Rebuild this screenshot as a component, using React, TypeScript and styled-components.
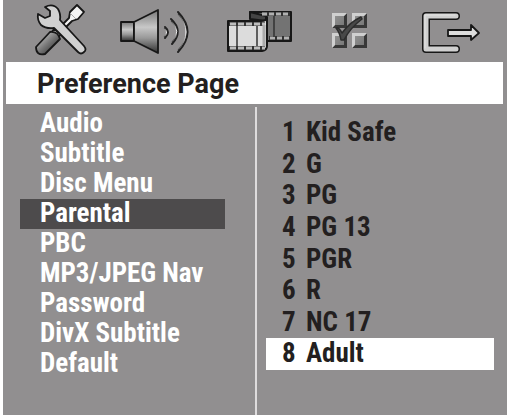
import React, { useState } from "react";
import styled, { createGlobalStyle } from "styled-components";

const GlobalStyle = createGlobalStyle`
  * { box-sizing: border-box; }
  body { margin: 0; background: #fff; }
  button { font: inherit; color: inherit; border: 0; padding: 0; background: none; cursor: pointer; }
`;

const Screen = styled.main`
  display: flex;
  flex-direction: column;
  min-height: 100vh;
  margin-left: 3px;
  background: #918f90;
  color: #231f20;
  font-family: "Roboto Condensed", "Liberation Sans Narrow", "Arial Narrow", "Liberation Sans", sans-serif;
  font-size: 27px;
  font-weight: 700;
`;

const IconBar = styled.nav`
  display: grid;
  grid-template-columns: 102fr 102fr 102fr 90fr 108fr;
  height: 62px;
`;

const IconButton = styled.button`
  display: flex;
  min-width: 0;
`;

const Icon = styled.svg`
  width: 100%;
  height: 62px;
`;

const Title = styled.h1`
  margin: 0 4px 0 3px;
  padding: 2px 31px 0;
  background: #fff;
  font-family: Roboto, "Liberation Sans", Arial, sans-serif;
  font-size: 27px;
  line-height: 40px;
  white-space: nowrap;
`;

const Columns = styled.div`
  display: grid;
  grid-template-columns: 1fr 1fr;
  flex: 1;
  padding-top: 3px;
`;

const Menu = styled.ul`
  margin: 0;
  padding: 2px 30px 0 17px;
  list-style: none;
`;

const MenuButton = styled.button<{ $active: boolean }>`
  display: block;
  width: 100%;
  padding: 0 0 2px 20px;
  background: ${(p) => (p.$active ? "#4d4b4c" : "transparent")};
  color: #fff;
  line-height: 28px;
  text-align: left;
  white-space: nowrap;
`;

const Panel = styled.section`
  border-left: 2px solid #dedcdd;
  padding: 10px 13px 0 9px;
`;

const Ratings = styled.ol`
  display: grid;
  grid-template-rows: repeat(8, 1fr);
  height: 253px;
  margin: 0;
  padding: 0;
  list-style: none;
`;

const RatingButton = styled.button<{ $active: boolean }>`
  display: grid;
  grid-template-columns: 24px 1fr;
  width: 100%;
  height: 100%;
  padding-left: 16px;
  background: ${(p) => (p.$active ? "#fff" : "transparent")};
  line-height: 30px;
  text-align: left;
  white-space: nowrap;
`;

const ToolsIcon = () => (
  <Icon viewBox="3 0 102 62" aria-hidden="true">
    <defs>
      <linearGradient id="handle" x1="0" y1="0" x2="1" y2="1">
        <stop offset=".15" stopColor="#c4c4c4" />
        <stop offset=".5" stopColor="#777" />
        <stop offset=".85" stopColor="#333" />
      </linearGradient>
    </defs>
    <g stroke="#171717" strokeWidth="1.8" strokeLinejoin="round">
      <path d="M56 31 69 18 70 12 77 5 84 12 78 19 72 21 60 33Z" fill="#f4f4f4" />
      <path d="M51 33 54 29 61 34 57 39Z" fill="#ddd" />
      <path d="M36 47 50 32Q58 31 60 39L45 54Q36 56 36 47Z" fill="url(#handle)" />
      <path d="M45 7Q53 3 58 9 61 14 60 20L84 46Q87 50 84 52 81 55 78 52L54 28Q46 29 41 25 37 20 38 14L45 18 50 16 50 11Z" fill="#d0d0d0" />
    </g>
    <path d="m70 13 6 6" stroke="#aaa" strokeWidth="1" />
  </Icon>
);

const SpeakerIcon = () => (
  <Icon viewBox="105 0 102 62" aria-hidden="true">
    <defs>
      <linearGradient id="cone" x1="0" y1="0" x2="0" y2="1">
        <stop offset="0" stopColor="#777" />
        <stop offset=".4" stopColor="#c8c8c8" />
        <stop offset=".65" stopColor="#999" />
        <stop offset="1" stopColor="#303030" />
      </linearGradient>
      <linearGradient id="wave" x1="0" y1="0" x2="0" y2="1">
        <stop offset="0" stopColor="#333" />
        <stop offset=".5" stopColor="#fff" />
        <stop offset="1" stopColor="#333" />
      </linearGradient>
    </defs>
    <g fill="url(#cone)" stroke="#171717" strokeWidth="1.8" strokeLinejoin="round">
      <path d="M121 22H134V41H121Z" />
      <path d="M134 22 158 10V53L134 41Z" />
    </g>
    <g fill="none" stroke="#222" strokeWidth="2" strokeLinecap="round">
      <path d="M165 27Q171 32 165 38" />
      <path d="M171 19Q184 31 172 44" />
      <path d="M178 12Q197 32 178 52" />
    </g>
    <g fill="none" stroke="url(#wave)" strokeWidth="1">
      <path d="M164 28Q169 32 164 37" />
      <path d="M171 21Q182 31 172 42" />
      <path d="M178 14Q194 32 178 50" />
    </g>
  </Icon>
);

const FilmIcon = () => (
  <Icon viewBox="207 0 102 62" aria-hidden="true">
    <g stroke="#171717" strokeWidth="2" strokeLinejoin="round">
      <path d="M250 12H291V41H264V17Z" fill="#737373" />
      <path d="M250 12 266 16V21L250 19Z" fill="#444" />
      <path d="M228 21H261Q267 21 267 17V46Q267 50 262 51H228Z" fill="#dcdcdc" />
    </g>
    <path d="M262 14H290M269 38H290" stroke="#333" strokeWidth="4" />
    <path d="M262 14H289M270 38H290" stroke="#b0b0b0" strokeWidth="3" strokeDasharray="5 2" />
    <path d="M229 24H265M229 48H265" stroke="#333" strokeWidth="4" />
    <path d="M230 24H265M230 48H265" stroke="#bcbcbc" strokeWidth="3" strokeDasharray="6 2" />
    <path d="M237 26V46M257 26V46M274 16V37" stroke="#333" strokeWidth="1.5" />
    <path d="M264 25V46" stroke="#aaa" strokeWidth="3" />
  </Icon>
);

const TILES = [[332, 13], [352, 13], [332, 33], [352, 33]];

const CheckIcon = () => (
  <Icon viewBox="309 0 90 62" aria-hidden="true">
    <defs>
      <linearGradient id="tile" x1="0" y1="0" x2="1" y2="1">
        <stop offset="0" stopColor="#999" />
        <stop offset="1" stopColor="#707070" />
      </linearGradient>
    </defs>
    {TILES.map(([x, y]) => (
      <g key={`${x}-${y}`}>
        <path d={`M${x} ${y}h15v15h-15z`} fill="url(#tile)" />
        <path d={`M${x} ${y + 15}h15v-15l-3 3v9h-9z`} fill="#383838" />
        <path d={`M${x} ${y + 15}v-15h15l-3 3h-9v9z`} fill="#d0d0d0" />
      </g>
    ))}
    <path d="M336 28Q339 27 342 33 350 22 361 17L362 19Q350 28 344 40H341Q340 33 336 28Z" fill="#484848" stroke="#2c2c2c" strokeWidth="1.5" strokeLinejoin="round" />
  </Icon>
);

const ExitIcon = () => (
  <Icon viewBox="399 0 108 62" aria-hidden="true">
    <g fill="none" strokeLinecap="round" strokeLinejoin="round">
      <path d="M456 16H426V49H456" stroke="#171717" strokeWidth="8" />
      <path d="M456 16H426V49H456" stroke="#d0d0d0" strokeWidth="5" />
      <path d="M455 15H425V48" stroke="#e4e4e4" strokeWidth="1" />
    </g>
    <path d="M448 30H471V25L479 33 471 40V36H448Z" fill="#dedede" stroke="#171717" strokeWidth="1.8" strokeLinejoin="round" />
  </Icon>
);

const TABS = [
  { name: "General", Glyph: ToolsIcon },
  { name: "Sound", Glyph: SpeakerIcon },
  { name: "Video", Glyph: FilmIcon },
  { name: "Preferences", Glyph: CheckIcon },
  { name: "Exit", Glyph: ExitIcon },
];

const MENU = ["Audio", "Subtitle", "Disc Menu", "Parental", "PBC", "MP3/JPEG Nav", "Password", "DivX Subtitle", "Default"];
const RATINGS = ["Kid Safe", "G", "PG", "PG 13", "PGR", "R", "NC 17", "Adult"];

export default function App() {
  const [section, setSection] = useState("Parental");
  const [rating, setRating] = useState("Adult");

  return (
    <>
      <GlobalStyle />
      <Screen>
        <IconBar aria-label="Setup pages">
          {TABS.map(({ name, Glyph }) => (
            <IconButton key={name} type="button" aria-label={name}>
              <Glyph />
            </IconButton>
          ))}
        </IconBar>
        <Title>Preference Page</Title>
        <Columns>
          <Menu>
            {MENU.map((item) => (
              <li key={item}>
                <MenuButton type="button" $active={item === section} aria-pressed={item === section} onClick={() => setSection(item)}>
                  {item}
                </MenuButton>
              </li>
            ))}
          </Menu>
          <Panel aria-label={section}>
            <Ratings>
              {RATINGS.map((item, i) => (
                <li key={item}>
                  <RatingButton type="button" $active={item === rating} aria-pressed={item === rating} onClick={() => setRating(item)}>
                    <span>{i + 1}</span>
                    <span>{item}</span>
                  </RatingButton>
                </li>
              ))}
            </Ratings>
          </Panel>
        </Columns>
      </Screen>
    </>
  );
}
